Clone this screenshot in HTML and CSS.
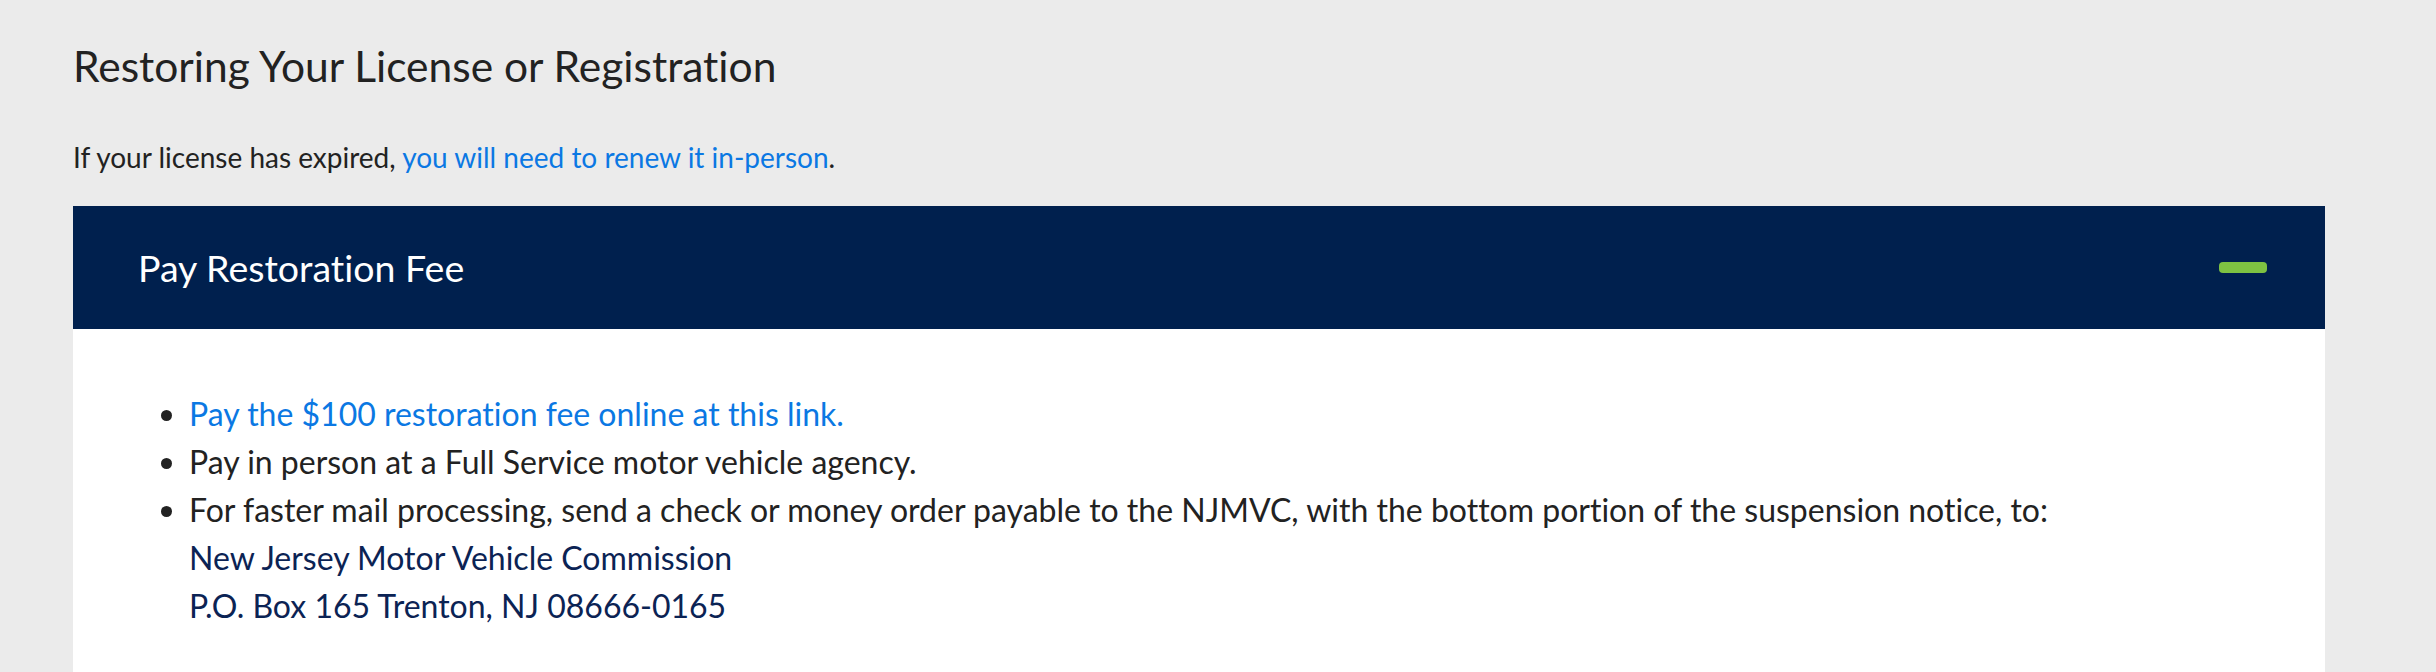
FILE: index.html
```html
<!DOCTYPE html>
<html lang="en">
<head>
<meta charset="utf-8">
<title>Restoring Your License or Registration</title>
<link rel="stylesheet" href="styles.css">
</head>
<body>
<main class="page">
  <h1 class="page-title">Restoring Your License or Registration</h1>
  <p class="intro">If your license has expired, <a href="#" class="link">you will need to renew it in-person</a>.</p>
  <section class="accordion">
    <div class="accordion-header">
      <h2 class="accordion-title">Pay Restoration Fee</h2>
      <span class="toggle" aria-hidden="true"></span>
    </div>
    <div class="accordion-body">
      <ul class="options">
        <li><a href="#" class="link">Pay the $100 restoration fee online at this link.</a></li>
        <li>Pay in person at a Full Service motor vehicle agency.</li>
        <li>For faster mail processing, send a check or money order payable to the NJMVC, with the bottom portion of the suspension notice, to:
          <span class="address">New Jersey Motor Vehicle Commission</span>
          <span class="address">P.O. Box 165 Trenton, NJ 08666-0165</span>
        </li>
      </ul>
    </div>
  </section>
</main>
</body>
</html>
```

FILE: styles.css
```css
html, body {
  margin: 0;
  padding: 0;
}

body {
  background: #ebebeb;
  font-family: Lato, "Noto Sans", sans-serif;
  font-variant-ligatures: none;
  color: #222222;
}

.page {
  padding: 42px 111px 0 73px;
}

.page-title {
  margin: 0;
  font-size: 42.5px;
  line-height: 48px;
  font-weight: 400;
  color: #222222;
}

.intro {
  margin: 47px 0 0;
  font-size: 28px;
  line-height: 40px;
}

.link {
  color: #0b78e3;
  text-decoration: none;
}

.accordion {
  margin-top: 29px;
  background: #ffffff;
}

.accordion-header {
  height: 123px;
  background: #00204e;
  display: flex;
  align-items: center;
  justify-content: space-between;
  padding: 0 58px 0 65px;
}

.accordion-title {
  margin: 0;
  font-size: 37.5px;
  line-height: 44px;
  font-weight: 400;
  color: #ffffff;
}

.toggle {
  width: 48px;
  height: 11px;
  border-radius: 4px;
  background: #7ec242;
}

.accordion-body {
  padding: 61px 66px 60px 94px;
}

.options {
  margin: 0;
  padding: 0 0 0 22px;
  font-size: 32px;
  line-height: 48px;
  color: #222222;
}

.address {
  display: block;
  color: #0b2354;
}
```
